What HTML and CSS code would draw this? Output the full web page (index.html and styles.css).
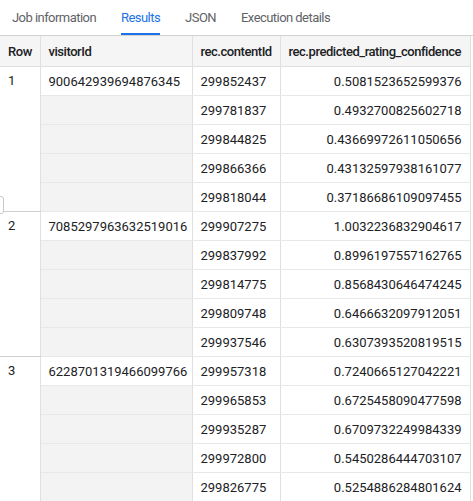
FILE: index.html
```html
<!DOCTYPE html>
<html>
<head>
<meta charset="utf-8">
<link rel="stylesheet" href="styles.css">
</head>
<body>
<div class="page">
  <div class="tabs">
    <div class="tab">Job information</div>
    <div class="tab active">Results</div>
    <div class="tab">JSON</div>
    <div class="tab">Execution details</div>
  </div>
  <div class="results">
    <div class="handle"></div>
    <table class="grid">
      <colgroup>
        <col class="c-row"><col class="c-vis"><col class="c-cid"><col class="c-conf">
      </colgroup>
      <thead>
        <tr><th>Row</th><th>visitorId</th><th>rec.contentId</th><th>rec.predicted_rating_confidence</th></tr>
      </thead>
      <tbody>
        <tr class="first"><td class="rownum" rowspan="5">1</td><td class="vis">900642939694876345</td><td>299852437</td><td class="num">0.5081523652599376</td></tr>
        <tr><td class="vis empty"></td><td>299781837</td><td class="num">0.4932700825602718</td></tr>
        <tr><td class="vis empty"></td><td>299844825</td><td class="num">0.43669972611050656</td></tr>
        <tr><td class="vis empty"></td><td>299866366</td><td class="num">0.43132597938161077</td></tr>
        <tr><td class="vis empty"></td><td>299818044</td><td class="num">0.37186686109097455</td></tr>
        <tr class="first"><td class="rownum" rowspan="5">2</td><td class="vis">7085297963632519016</td><td>299907275</td><td class="num">1.0032236832904617</td></tr>
        <tr><td class="vis empty"></td><td>299837992</td><td class="num">0.8996197557162765</td></tr>
        <tr><td class="vis empty"></td><td>299814775</td><td class="num">0.8568430646474245</td></tr>
        <tr><td class="vis empty"></td><td>299809748</td><td class="num">0.6466632097912051</td></tr>
        <tr><td class="vis empty"></td><td>299937546</td><td class="num">0.6307393520819515</td></tr>
        <tr class="first"><td class="rownum" rowspan="5">3</td><td class="vis">6228701319466099766</td><td>299957318</td><td class="num">0.7240665127042221</td></tr>
        <tr><td class="vis empty"></td><td>299965853</td><td class="num">0.6725458090477598</td></tr>
        <tr><td class="vis empty"></td><td>299935287</td><td class="num">0.6709732249984339</td></tr>
        <tr><td class="vis empty"></td><td>299972800</td><td class="num">0.5450286444703107</td></tr>
        <tr><td class="vis empty"></td><td>299826775</td><td class="num">0.5254886284801624</td></tr>
      </tbody>
    </table>
  </div>
</div>
</body>
</html>
```
FILE: styles.css
```css
html, body {
  margin: 0;
  padding: 0;
  background: #ffffff;
}
body {
  font-family: Roboto, "Liberation Sans", sans-serif;
  color: #202124;
  overflow: hidden;
}
.page {
  width: 473px;
  height: 501px;
  overflow: hidden;
}
.tabs {
  display: flex;
  height: 35px;
  border-bottom: 1px solid #d3d3d3;
  padding-left: 12px;
  box-sizing: content-box;
}
.tab {
  margin-right: 25px;
  font-size: 13px;
  color: #5f6368;
  line-height: 35px;
  height: 35px;
  box-sizing: border-box;
  letter-spacing: -0.55px;
}
.tab.active {
  color: #1a73e8;
  border-bottom: 2px solid #1a73e8;
}
.results {
  position: relative;
}
.handle {
  position: absolute;
  left: -6px;
  top: 160px;
  width: 8px;
  height: 16px;
  border: 1px solid #c8c8c8;
  border-radius: 3px;
  background: #fff;
}
.grid {
  border-collapse: collapse;
  table-layout: fixed;
  width: 470px;
  font-size: 13px;
}
.c-row { width: 40px; }
.c-vis { width: 152px; }
.c-cid { width: 88px; }
.c-conf { width: 190px; }
.grid th {
  background: #f5f5f5;
  font-weight: 500;
  text-align: left;
  height: 30px;
  padding: 0 8px;
  border-right: 1px solid #e0e0e0;
  border-bottom: 1px solid #e0e0e0;
  white-space: nowrap;
  overflow: hidden;
  letter-spacing: -0.45px;
}
.grid td {
  height: 28px;
  padding: 0 8px;
  border-right: 1px solid #e0e0e0;
  border-bottom: 1px solid #e8e8e8;
  white-space: nowrap;
  background: #ffffff;
}
.grid td.num { text-align: right; }
.grid td.rownum {
  vertical-align: top;
  line-height: 28px;
  border-bottom: 1px solid #cfcfcf;
}
.grid td.vis.empty { background: #f3f3f3; }
.grid tr.first td { border-top: 1px solid #cfcfcf; }
.grid tbody tr:first-child td { border-top: 1px solid #e0e0e0; }
```
